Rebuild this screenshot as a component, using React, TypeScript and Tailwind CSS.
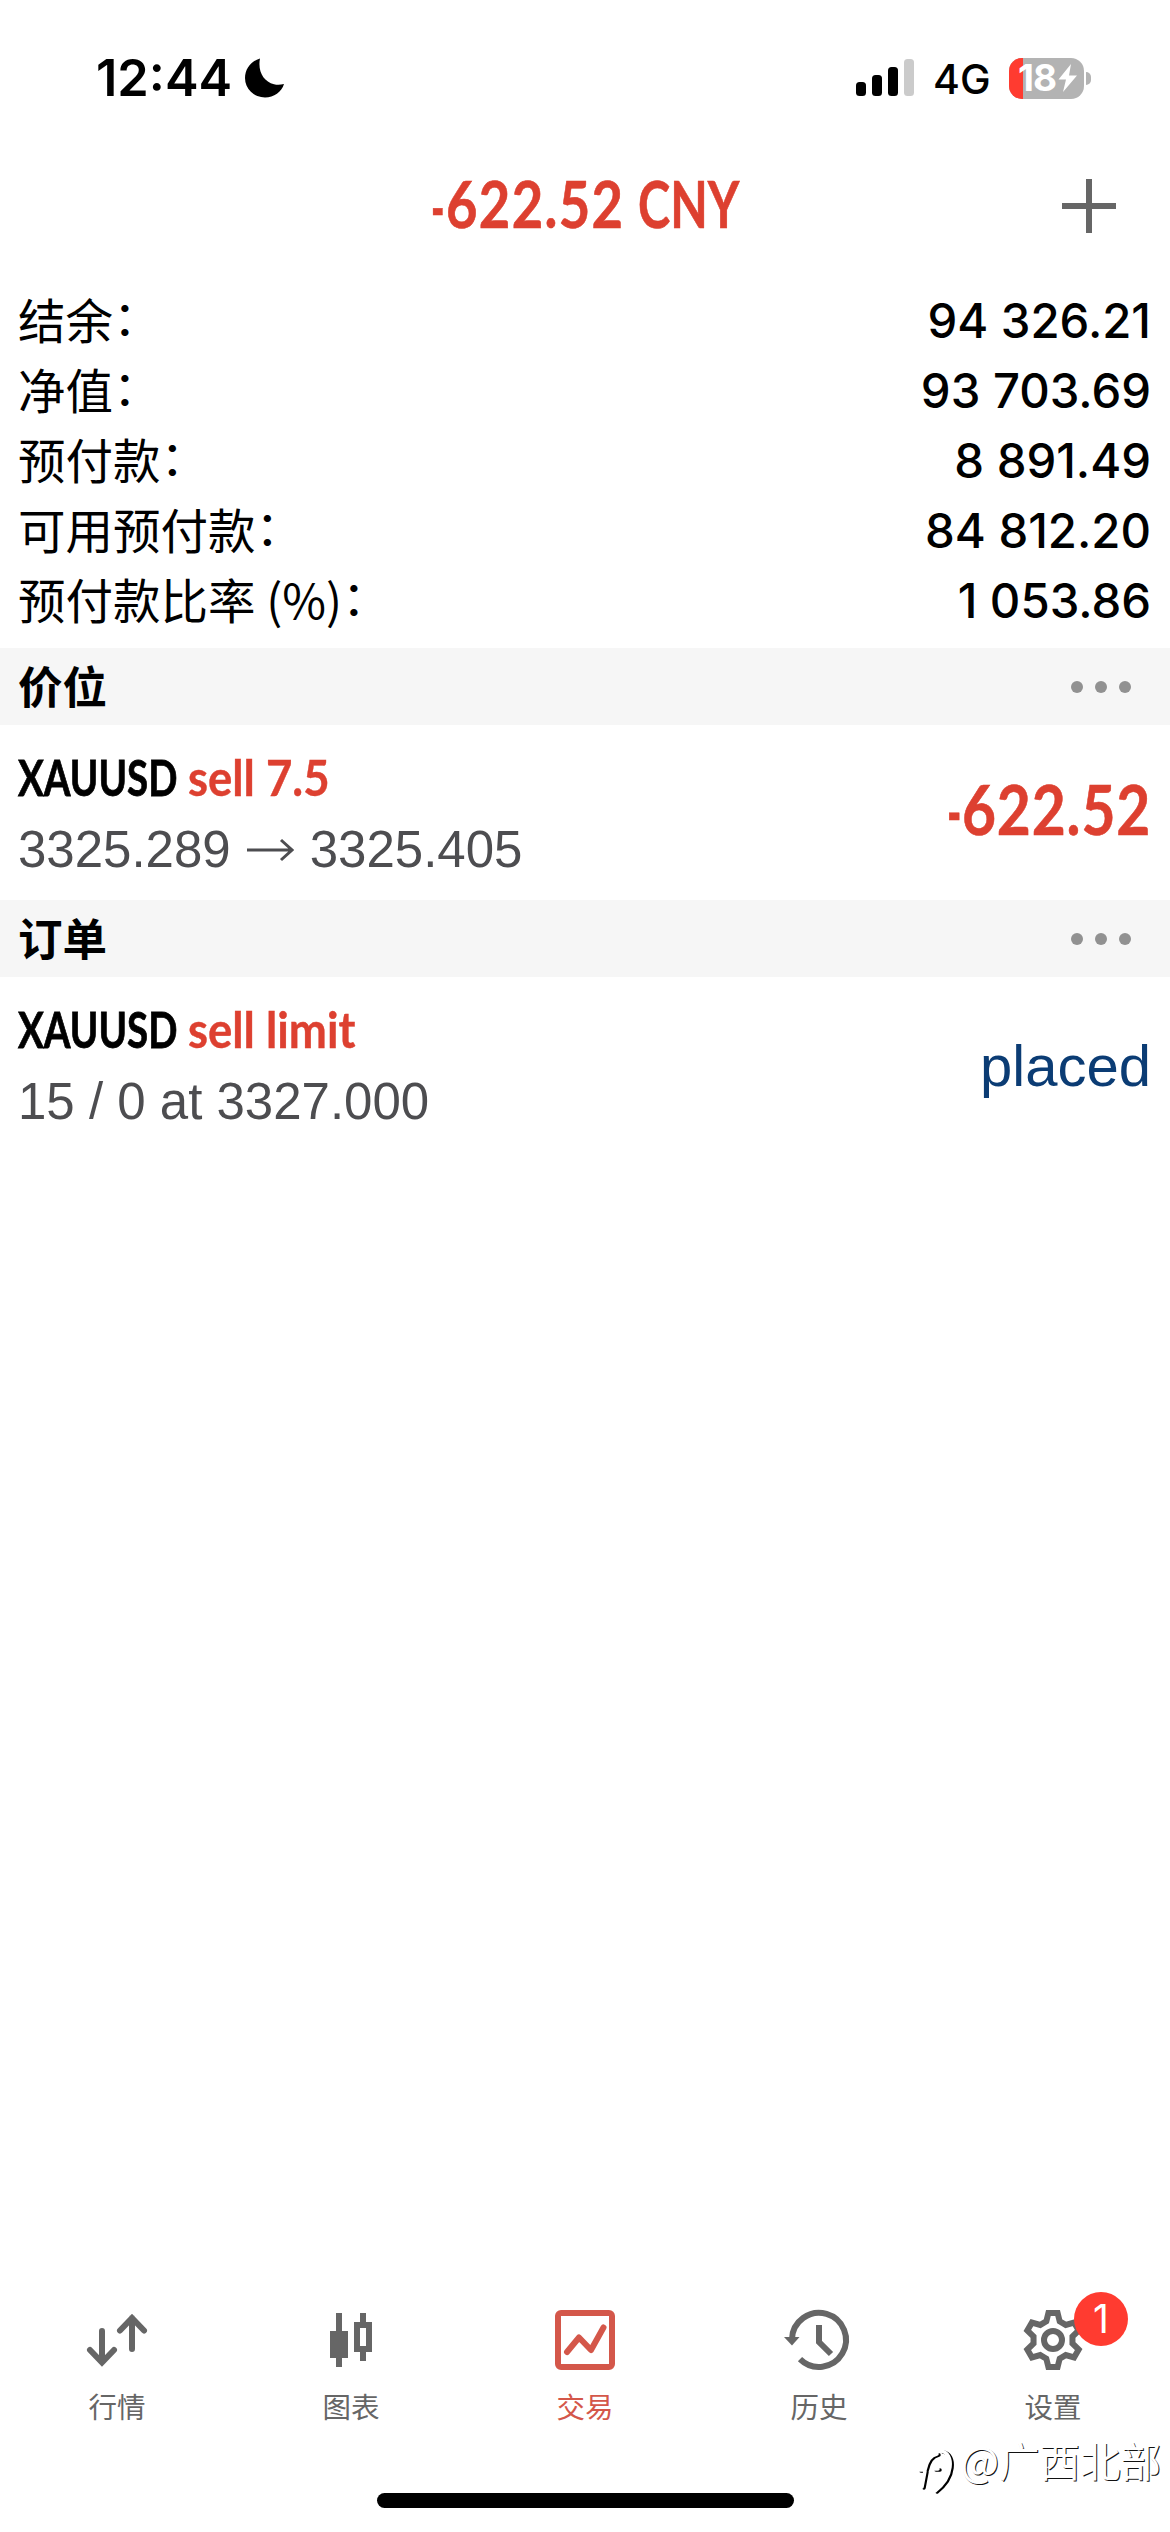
import type { ReactNode } from 'react'

type Tab = 'quotes' | 'charts' | 'trade' | 'history' | 'settings'

const SUMMARY = [
  { label: '结余', value: '94 326.21' },
  { label: '净值', value: '93 703.69' },
  { label: '预付款', value: '8 891.49' },
  { label: '可用预付款', value: '84 812.20' },
  { label: '预付款比率 (%)', value: '1 053.86' },
]

// outline of one gear tooth pointing up, repeated every 60 degrees
const TOOTH = [[-6.7, -18.6], [-4.6, -27], [4.6, -27], [6.7, -18.6]]
const GEAR_POINTS = [0, 60, 120, 180, 240, 300]
  .flatMap((deg) => {
    const a = (deg * Math.PI) / 180
    return TOOTH.map(([x, y]) => [
      33 + x * Math.cos(a) - y * Math.sin(a),
      33 + x * Math.sin(a) + y * Math.cos(a),
    ])
  })
  .map(([x, y]) => `${x.toFixed(2)},${y.toFixed(2)}`)
  .join(' ')

function StatusBar() {
  return (
    <div className="flex h-[156px] shrink-0 items-start justify-between pl-[96px] pr-[79px] pt-[48px]">
      <div className="flex h-[60px] items-center">
        <span className="w-[149px] whitespace-nowrap font-['Inter'] text-[50.500px] font-semibold leading-[60px]">12:44</span>
        <svg className="h-[40px] w-[40px]" viewBox="0 0 40 40">
          <path d="M15 0.5C6 3 0 11 0 20a20 19.5 0 0 0 20 19.5c9 0 16.500-5.500 19-13.500-4 1-7 1-10 .2C18.500 24 12.500 13 15 .5Z" fill="#000" />
        </svg>
      </div>
      <div className="flex h-[60px] items-center">
        <svg className="h-[38px] w-[58px]" viewBox="0 0 58 38">
          <rect x="0" y="23" width="10" height="14" rx="3.500" />
          <rect x="16" y="16" width="10" height="21" rx="3.500" />
          <rect x="32" y="8" width="10" height="29" rx="3.500" />
          <rect x="48" y="0" width="10" height="37" rx="3.500" fill="#cbcbcb" />
        </svg>
        <span className="ml-[19px] w-[76px] whitespace-nowrap pt-[2px] font-['Inter'] text-[41px] font-medium leading-[60px]">4G</span>
        <div className="relative flex h-[41px] w-[75px] items-center rounded-[13px] bg-[#b3b3b3] text-white">
          <div className="absolute inset-y-0 left-0 w-[14px] rounded-l-[13px] bg-[#ff3b30]" />
          <span className="relative ml-[9px] w-[40px] whitespace-nowrap font-['Inter'] text-[37px] font-bold leading-[46px] tracking-[-1px]">18</span>
          <svg className="relative h-[28px] w-[20px]" viewBox="0 0 20 28">
            <path d="M13 0 0.500 15.500h7.500L5 28 19 11.500h-8Z" fill="#fff" />
          </svg>
        </div>
        <div className="ml-[2px] h-[13px] w-[5px] rounded-r-full bg-[#b3b3b3]" />
      </div>
    </div>
  )
}

function Header() {
  return (
    <div className="grid h-[130px] shrink-0 grid-cols-[1fr_auto_1fr] items-start pt-[23px]">
      <span />
      <span className="flex h-[54px] w-[309px] items-center whitespace-nowrap font-['Lato'] text-[65px] font-bold leading-[48px] text-[#dd4030] [-webkit-text-stroke:0.6px_#dd4030]">
        <span className="w-[15px] shrink-0">
          <span className="inline-block origin-left scale-x-[0.56]">-</span>
        </span>
        <span className="mb-[6px] w-[192px] shrink-0">
          <span className="inline-block origin-left scale-x-[0.835] tracking-[1.600px]">622.52</span>
        </span>
        <span className="mb-[6px] inline-block origin-left scale-x-[0.75]">CNY</span>
      </span>
      <svg className="mr-[54px] h-[54px] w-[54px] justify-self-end" viewBox="0 0 54 54">
        <path d="M27 0v54M0 27h54" stroke="#666" strokeWidth="6" />
      </svg>
    </div>
  )
}

function SectionHeader({ title }: { title: string }) {
  return (
    <div className="flex h-[77px] shrink-0 items-center justify-between bg-[#f6f6f6] pl-[18px] pr-[39px]">
      <h2 className="pb-1 text-[44.500px] font-bold leading-[73px]">{title}</h2>
      <div className="flex gap-3">
        <i className="size-3 rounded-full bg-[#919191]" />
        <i className="size-3 rounded-full bg-[#919191]" />
        <i className="size-3 rounded-full bg-[#919191]" />
      </div>
    </div>
  )
}

interface DealRowProps {
  action: string
  details: ReactNode
  result: ReactNode
}

function DealRow({ action, details, result }: DealRowProps) {
  return (
    <div className="flex h-[175px] shrink-0 items-start justify-between pl-[18px] pr-[19px] pt-[20px]">
      <div>
        <div className="flex h-[66px] whitespace-nowrap font-['Lato'] text-[50px] font-bold leading-[64px]">
          <div className="w-[170px] [-webkit-text-stroke:0.8px_#000]">
            <span className="inline-block origin-left scale-x-[0.77]">XAUUSD</span>
          </div>
          <div className="text-[#dd4030] [-webkit-text-stroke:0.4px_#dd4030]">
            <span className="inline-block origin-left scale-x-[0.91]">{action}</span>
          </div>
        </div>
        <div className="flex h-[78px] items-center whitespace-pre font-['Liberation_Sans'] text-[51px] text-[#4d4d50]">
          {details}
        </div>
      </div>
      {result}
    </div>
  )
}

function TabIcon({ tab }: { tab: Tab }) {
  return (
    <svg className="h-[66px] w-[66px] overflow-visible" viewBox="0 0 66 66" fill="none" stroke="currentColor" strokeWidth="6">
      {tab === 'quotes' && (
        <path d="M18 24v31M6 43l12 12.500L30 43M48 42V11M36 23.500 48 11l12 12.500" strokeLinecap="round" />
      )}
      {tab === 'charts' && (
        <g fill="currentColor" stroke="none">
          <path d="M18 6h6v18h6v27h-6v9h-6v-9h-6V24h6Z" />
          <path fillRule="evenodd" d="M42 6h6v9h6v30h-6v9h-6v-9h-6V15h6ZM42 21v18h6V21Z" />
        </g>
      )}
      {tab === 'trade' && (
        <>
          <rect x="6" y="6" width="54" height="54" rx="3" />
          <path d="M15 45 27 30.500 39 43 51.500 20.500" strokeLinecap="round" strokeLinejoin="round" />
        </>
      )}
      {tab === 'history' && (
        <>
          <path d="M6 32A27 27 0 1 1 14 52.100" />
          <path d="M-2 30h15.500L6 38.500Z" fill="currentColor" stroke="none" />
          <path d="M33 18v17l12 12" />
        </>
      )}
      {tab === 'settings' && (
        <>
          <polygon points={GEAR_POINTS} />
          <circle cx="33" cy="33" r="9" />
        </>
      )}
    </svg>
  )
}

function TabItem({ tab, label, badge, active }: { tab: Tab; label: string; badge?: string; active?: boolean }) {
  return (
    <div className={active ? 'flex flex-col items-center text-[#d4574a]' : 'flex flex-col items-center text-[#666]'}>
      <div className="relative h-[66px] w-[66px]">
        <TabIcon tab={tab} />
        {badge && (
          <span className="absolute left-[54px] top-[-15px] size-[54px] rounded-full bg-[#ff3b30] text-center font-['Inter'] text-[39px] leading-[53px] text-white">
            {badge}
          </span>
        )}
      </div>
      <span className="mt-[13px] text-[28.500px] leading-[40px]">{label}</span>
    </div>
  )
}

function Watermark() {
  return (
    <div className="absolute right-[9px] top-[2428px] flex items-center text-white">
      <svg className="mr-[7px] mt-[16px] h-[48px] w-[36px] overflow-visible drop-shadow-[2px_1px_0_#000]" viewBox="0 0 36 48" fill="none" stroke="#fff" strokeWidth="3.500" strokeLinecap="round">
        <path d="M4 43 7 27M1 26h6C9 16 13 11 19 10M23 7c7 1 10 8 9 16-1 9-6 17-15 24M16 25h4" />
      </svg>
      <span className="whitespace-nowrap text-[40.500px] leading-[60px] [text-shadow:1px_1px_0_#111]">@广西北部</span>
    </div>
  )
}

export default function App() {
  return (
    <div className="relative flex h-[2532px] w-[1170px] flex-col overflow-hidden bg-white font-['Noto_Sans_CJK_SC',sans-serif] text-black">
      <StatusBar />
      <Header />

      <div className="h-[362px] shrink-0 pl-[18px] pr-[19px]">
        {SUMMARY.map((row) => (
          <div key={row.label} className="flex h-[70px] items-center justify-between whitespace-nowrap leading-[70px]">
            <span className="pb-[5px] text-[47.500px] leading-[65px]">
              {row.label}
              <span className="inline-block -translate-y-[4px]">：</span>
            </span>
            <span className="font-['Inter'] text-[47.300px] font-medium">{row.value}</span>
          </div>
        ))}
      </div>

      <SectionHeader title="价位" />
      <DealRow
        action="sell 7.5"
        details={
          <>
            3325.289
            <svg className="ml-[15px] mr-[16px] h-[24px] w-[48px]" viewBox="0 0 48 24" fill="none" stroke="currentColor" strokeWidth="3">
              <path d="M1 12h45M35 2l11 10-11 10" />
            </svg>
            3325.405
          </>
        }
        result={
          <div className="mt-[33px] flex h-[66px] w-[204px] items-center whitespace-nowrap font-['Lato'] text-[69px] font-bold leading-[62px] text-[#dd4030] [-webkit-text-stroke:0.6px_#dd4030]">
            <span className="w-[15px] shrink-0">
              <span className="inline-block origin-left scale-x-[0.56]">-</span>
            </span>
            <span className="mb-1 inline-block origin-left scale-x-[0.85] tracking-[1px]">622.52</span>
          </div>
        }
      />

      <SectionHeader title="订单" />
      <DealRow
        action="sell limit"
        details="15 / 0 at 3327.000"
        result={<span className="pt-[36px] font-['Liberation_Sans'] text-[58px] leading-[66px] text-[#0b3c74]">placed</span>}
      />

      <div className="mt-auto grid h-[186px] shrink-0 grid-cols-5">
        <TabItem tab="quotes" label="行情" />
        <TabItem tab="charts" label="图表" />
        <TabItem tab="trade" label="交易" active />
        <TabItem tab="history" label="历史" />
        <TabItem tab="settings" label="设置" badge="1" />
      </div>
      <div className="mb-[24px] h-[15px] w-[417px] shrink-0 self-center rounded-full bg-black" />

      <Watermark />
    </div>
  )
}
